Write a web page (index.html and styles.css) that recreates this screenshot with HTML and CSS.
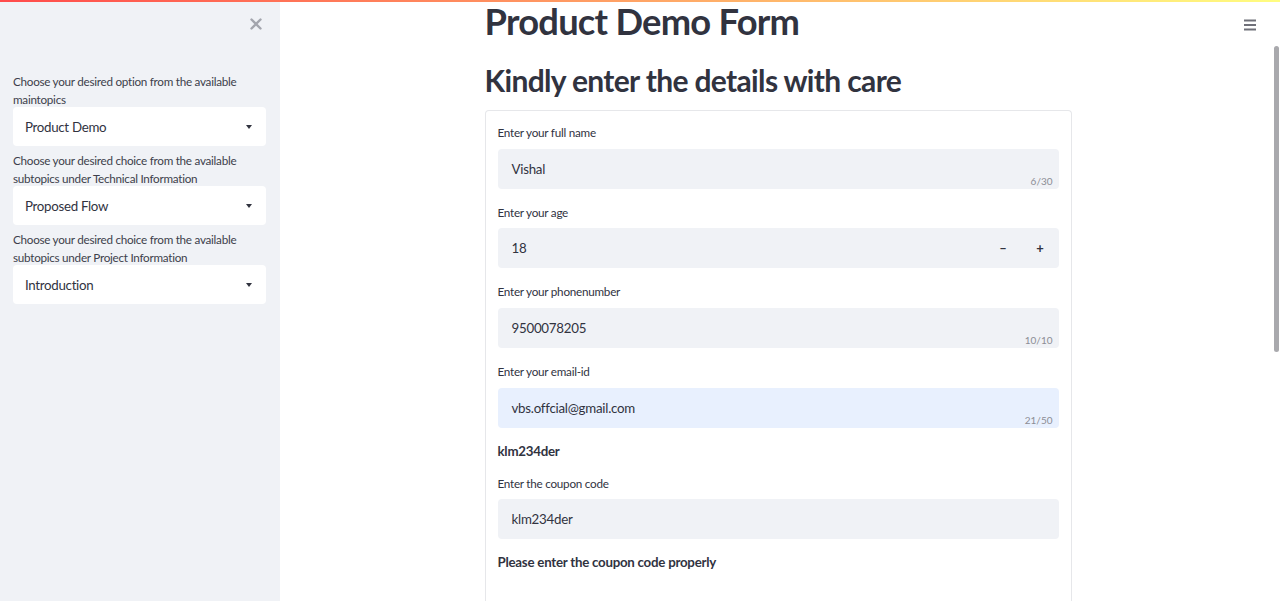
FILE: index.html
```html
<!DOCTYPE html>
<html lang="en">
<head>
<meta charset="utf-8">
<title>Product Demo Form</title>
<link rel="stylesheet" href="styles.css">
</head>
<body>
<div class="decoration"></div>
<div class="app">
  <aside class="sidebar">
    <div class="sidebar-top">
      <button class="close-btn" aria-label="Close sidebar">
        <svg width="12" height="12" viewBox="0 0 12 12"><path d="M1.5 1.5 L10.5 10.5 M10.5 1.5 L1.5 10.5" stroke="#a3a5ad" stroke-width="2.4" stroke-linecap="round"/></svg>
      </button>
    </div>
    <div class="side-widgets">
      <div class="side-widget">
        <div class="side-label">Choose your desired option from the available maintopics</div>
        <div class="select"><span>Product Demo</span><span class="caret"></span></div>
      </div>
      <div class="side-widget">
        <div class="side-label">Choose your desired choice from the available subtopics under Technical Information</div>
        <div class="select"><span>Proposed Flow</span><span class="caret"></span></div>
      </div>
      <div class="side-widget">
        <div class="side-label">Choose your desired choice from the available subtopics under Project Information</div>
        <div class="select"><span>Introduction</span><span class="caret"></span></div>
      </div>
    </div>
  </aside>
  <main class="main">
    <button class="menu-btn" aria-label="Menu">
      <svg width="14" height="14" viewBox="0 0 14 14"><path d="M1 2.5 H13 M1 7 H13 M1 11.5 H13" stroke="#6f7079" stroke-width="2"/></svg>
    </button>
    <div class="block">
      <h1 class="title">Product Demo Form</h1>
      <h2 class="subtitle">Kindly enter the details with care</h2>
      <div class="form">
        <div class="field">
          <div class="label">Enter your full name</div>
          <div class="input"><span>Vishal</span><span class="count">6/30</span></div>
        </div>
        <div class="field">
          <div class="label">Enter your age</div>
          <div class="input number"><span>18</span>
            <div class="steps"><span class="step">&#8211;</span><span class="step plus">+</span></div>
          </div>
        </div>
        <div class="field">
          <div class="label">Enter your phonenumber</div>
          <div class="input"><span>9500078205</span><span class="count">10/10</span></div>
        </div>
        <div class="field">
          <div class="label">Enter your email-id</div>
          <div class="input autofill"><span>vbs.offcial@gmail.com</span><span class="count">21/50</span></div>
        </div>
        <p class="strong">klm234der</p>
        <div class="field">
          <div class="label">Enter the coupon code</div>
          <div class="input"><span>klm234der</span></div>
        </div>
        <p class="strong">Please enter the coupon code properly</p>
      </div>
    </div>
    <div class="scrollbar"></div>
  </main>
</div>
</body>
</html>
```
FILE: styles.css
```css
* { box-sizing: border-box; }
html, body {
  margin: 0;
  height: 100%;
  overflow: hidden;
}
body {
  font-family: Lato, "Open Sans", sans-serif;
  color: #31333f;
  background: #fff;
  font-size: 13.3px;
  letter-spacing: -0.25px;
  position: relative;
}
.decoration {
  position: absolute;
  top: 0; left: 0; right: 0;
  height: 2px;
  background: linear-gradient(90deg, #ff4b4b, #fffd80);
  z-index: 5;
}
.app {
  display: flex;
  height: 100%;
}
.sidebar {
  width: 280px;
  flex: none;
  background: #f0f2f6;
  height: 100%;
  padding: 0 14px 0 13px;
}
.sidebar-top {
  display: flex;
  justify-content: flex-end;
  padding-top: 18px;
  height: 72px;
}
.close-btn {
  border: 0;
  background: none;
  padding: 0;
  margin-right: 4px;
  width: 12px;
  height: 12px;
  display: flex;
}
.side-widgets {
  display: flex;
  flex-direction: column;
  gap: 5px;
}
.side-label {
  font-size: 11.7px;
  line-height: 18px;
  color: #3d3f4b;
  margin-bottom: -1px;
  letter-spacing: -0.27px;
}
.select {
  height: 39px;
  background: #fff;
  border-radius: 4px;
  display: flex;
  align-items: center;
  justify-content: space-between;
  padding: 0 14px 0 12px;
  font-size: 13.3px;
  letter-spacing: -0.3px;
}
.caret {
  width: 0; height: 0;
  border-left: 3.5px solid transparent;
  border-right: 3.5px solid transparent;
  border-top: 4px solid #31333f;
  margin-top: 1px;
}
.main {
  flex: 1;
  position: relative;
  display: flex;
  justify-content: center;
  padding-right: 4px;
}
.menu-btn {
  position: absolute;
  top: 18px;
  right: 23px;
  border: 0;
  background: none;
  padding: 0;
  display: flex;
}
.scrollbar {
  position: absolute;
  right: 1px;
  top: 46px;
  width: 5px;
  height: 306px;
  background: #a9a9ad;
  border-radius: 3px;
}
.block {
  width: 613px;
  padding: 0 13px;
}
.title {
  font-size: 36.3px;
  font-weight: 700;
  margin: -1px 0 0;
  line-height: 44px;
  letter-spacing: -0.75px;
}
.subtitle {
  font-size: 30px;
  font-weight: 700;
  margin: 17px 0 0;
  line-height: 40px;
  letter-spacing: -0.65px;
}
.form {
  margin-top: 10px;
  border: 1px solid #e6e7ea;
  border-bottom: 0;
  border-radius: 4px 4px 0 0;
  padding: 12px 12px 40px;
  display: flex;
  flex-direction: column;
}
.field {
  margin-bottom: 14.2px;
}
.label {
  font-size: 11.7px;
  line-height: 18px;
  margin-bottom: 7.5px;
  color: #31333f;
}
.input {
  height: 40px;
  background: #f0f2f6;
  border-radius: 4px;
  position: relative;
  display: flex;
  align-items: center;
  padding: 0 14px;
  font-size: 13.3px;
}
.input.autofill { background: #e8f0fe; }
.count {
  position: absolute;
  right: 6px;
  bottom: 2px;
  font-size: 10px;
  color: #8c8d95;
  letter-spacing: 0;
}
.number { justify-content: space-between; padding-right: 0; }
.steps { display: flex; height: 100%; }
.step {
  width: 37px;
  display: flex;
  align-items: center;
  justify-content: center;
  font-weight: 700;
  font-size: 13px;
}
.strong {
  margin: -1px 0 13px;
  font-weight: 700;
  font-size: 13.3px;
  line-height: 20px;
}
```
